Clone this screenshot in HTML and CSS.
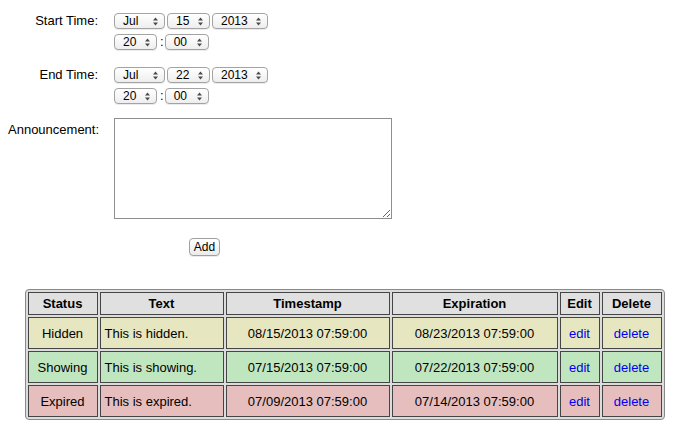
FILE: index.html
```
<!DOCTYPE html>
<html>
<head>
<meta charset="utf-8">
<title>Announcements</title>
<link rel="stylesheet" href="styles.css">
</head>
<body>
<form class="form">
  <div class="row">
    <label class="lbl">Start Time:</label>
    <div class="fields">
      <div class="line">
        <span class="sel w-month">Jul<svg class="arr" width="5" height="9" viewBox="0 0 5 9"><path d="M0 3.6 L2.5 0.6 L5 3.6 Z M0 5.4 L2.5 8.4 L5 5.4 Z"/></svg></span>
        <span class="sel w-day">15<svg class="arr" width="5" height="9" viewBox="0 0 5 9"><path d="M0 3.6 L2.5 0.6 L5 3.6 Z M0 5.4 L2.5 8.4 L5 5.4 Z"/></svg></span>
        <span class="sel w-year">2013<svg class="arr" width="5" height="9" viewBox="0 0 5 9"><path d="M0 3.6 L2.5 0.6 L5 3.6 Z M0 5.4 L2.5 8.4 L5 5.4 Z"/></svg></span>
      </div>
      <div class="line">
        <span class="sel w-hour">20<svg class="arr" width="5" height="9" viewBox="0 0 5 9"><path d="M0 3.6 L2.5 0.6 L5 3.6 Z M0 5.4 L2.5 8.4 L5 5.4 Z"/></svg></span>
        <span class="colon">:</span>
        <span class="sel w-min">00<svg class="arr" width="5" height="9" viewBox="0 0 5 9"><path d="M0 3.6 L2.5 0.6 L5 3.6 Z M0 5.4 L2.5 8.4 L5 5.4 Z"/></svg></span>
      </div>
    </div>
  </div>
  <div class="row row-end">
    <label class="lbl">End Time:</label>
    <div class="fields">
      <div class="line">
        <span class="sel w-month">Jul<svg class="arr" width="5" height="9" viewBox="0 0 5 9"><path d="M0 3.6 L2.5 0.6 L5 3.6 Z M0 5.4 L2.5 8.4 L5 5.4 Z"/></svg></span>
        <span class="sel w-day">22<svg class="arr" width="5" height="9" viewBox="0 0 5 9"><path d="M0 3.6 L2.5 0.6 L5 3.6 Z M0 5.4 L2.5 8.4 L5 5.4 Z"/></svg></span>
        <span class="sel w-year">2013<svg class="arr" width="5" height="9" viewBox="0 0 5 9"><path d="M0 3.6 L2.5 0.6 L5 3.6 Z M0 5.4 L2.5 8.4 L5 5.4 Z"/></svg></span>
      </div>
      <div class="line">
        <span class="sel w-hour">20<svg class="arr" width="5" height="9" viewBox="0 0 5 9"><path d="M0 3.6 L2.5 0.6 L5 3.6 Z M0 5.4 L2.5 8.4 L5 5.4 Z"/></svg></span>
        <span class="colon">:</span>
        <span class="sel w-min">00<svg class="arr" width="5" height="9" viewBox="0 0 5 9"><path d="M0 3.6 L2.5 0.6 L5 3.6 Z M0 5.4 L2.5 8.4 L5 5.4 Z"/></svg></span>
      </div>
    </div>
  </div>
  <div class="row row-ann">
    <label class="lbl lbl-ann">Announcement:</label>
    <textarea class="ta"></textarea>
  </div>
  <div class="actions">
    <button type="button" class="btn">Add</button>
  </div>
</form>

<table class="list">
  <thead>
    <tr>
      <th class="c-status">Status</th>
      <th class="c-text">Text</th>
      <th class="c-ts">Timestamp</th>
      <th class="c-exp">Expiration</th>
      <th class="c-edit">Edit</th>
      <th class="c-del">Delete</th>
    </tr>
  </thead>
  <tbody>
    <tr class="hidden-row">
      <td>Hidden</td>
      <td class="txt">This is hidden.</td>
      <td>08/15/2013 07:59:00</td>
      <td>08/23/2013 07:59:00</td>
      <td><a href="#">edit</a></td>
      <td><a href="#">delete</a></td>
    </tr>
    <tr class="showing-row">
      <td>Showing</td>
      <td class="txt">This is showing.</td>
      <td>07/15/2013 07:59:00</td>
      <td>07/22/2013 07:59:00</td>
      <td><a href="#">edit</a></td>
      <td><a href="#">delete</a></td>
    </tr>
    <tr class="expired-row">
      <td>Expired</td>
      <td class="txt">This is expired.</td>
      <td>07/09/2013 07:59:00</td>
      <td>07/14/2013 07:59:00</td>
      <td><a href="#">edit</a></td>
      <td><a href="#">delete</a></td>
    </tr>
  </tbody>
</table>
</body>
</html>
```

FILE: styles.css
```
body {
  margin: 8px;
  font-family: "Liberation Sans", Arial, sans-serif;
  font-size: 13px;
  color: #000;
  background: #fff;
}

.form {
  padding-top: 5px;
}

.row {
  display: flex;
  align-items: flex-start;
  column-gap: 16px;
}

.row-end {
  margin-top: 17px;
}

.row-ann {
  margin-top: 14px;
}

.lbl {
  flex: none;
  width: 90px;
  text-align: right;
  line-height: 15px;
}

.lbl-ann {
  padding-top: 4px;
}

.fields {
  display: flex;
  flex-direction: column;
  gap: 5px;
}

.line {
  display: flex;
  align-items: center;
  gap: 2px;
}

.sel {
  box-sizing: border-box;
  height: 16px;
  display: flex;
  align-items: center;
  justify-content: space-between;
  padding: 0 6px 0 8px;
  border: 1px solid #a3a3a3;
  border-radius: 4px;
  background: linear-gradient(#ffffff, #eeeeee);
  box-shadow: 0 1px 0 rgba(0, 0, 0, 0.08);
  font-size: 12px;
  line-height: 14px;
}

.arr {
  fill: #4a4a4a;
  flex: none;
}

.w-month { width: 51px; }
.w-day { width: 43px; }
.w-year { width: 56px; }
.w-hour { width: 43px; }
.w-min { width: 44px; }

.colon {
  font-size: 13px;
  line-height: 14px;
  margin: 0 -1px 0 1px;
}

.ta {
  box-sizing: border-box;
  width: 278px;
  height: 101px;
  margin: 0;
  border: 1px solid #8e8e8e;
  padding: 2px;
  font-family: "Liberation Sans", Arial, sans-serif;
  font-size: 13px;
}

.actions {
  margin-top: 19px;
  padding-left: 181px;
}

.btn {
  box-sizing: border-box;
  width: 31px;
  height: 18px;
  padding: 0;
  margin: 0;
  border: 1px solid #a0a0a0;
  border-radius: 4px;
  background: linear-gradient(#ffffff, #ebebeb);
  box-shadow: 0 1px 0 rgba(0, 0, 0, 0.08);
  font-family: "Liberation Sans", Arial, sans-serif;
  font-size: 12px;
  color: #000;
  display: block;
}

.list {
  margin: 33px auto 0;
  width: 640px;
  border-collapse: separate;
  border-spacing: 2px;
  border: 1px solid #8a8a8a;
  border-radius: 4px;
  background: #dcdcdc;
  table-layout: fixed;
}

.list th,
.list td {
  box-sizing: border-box;
  border: 1px solid #454545;
  padding: 0 4px;
  text-align: center;
  vertical-align: middle;
  white-space: nowrap;
}

.list th {
  height: 23px;
  background: #e0e0e0;
  font-weight: bold;
}

.list td {
  height: 32px;
}

.list td.txt {
  text-align: left;
}

.c-status { width: 70px; }
.c-text { width: 124px; }
.c-ts { width: 164px; }
.c-exp { width: 166px; }
.c-edit { width: 40px; }
.c-del { width: 60px; }

.hidden-row td { background: #e6e6c0; }
.showing-row td { background: #c0e6c0; }
.expired-row td { background: #e6bebe; }

.list a {
  color: #0000ee;
  text-decoration: none;
}
```
